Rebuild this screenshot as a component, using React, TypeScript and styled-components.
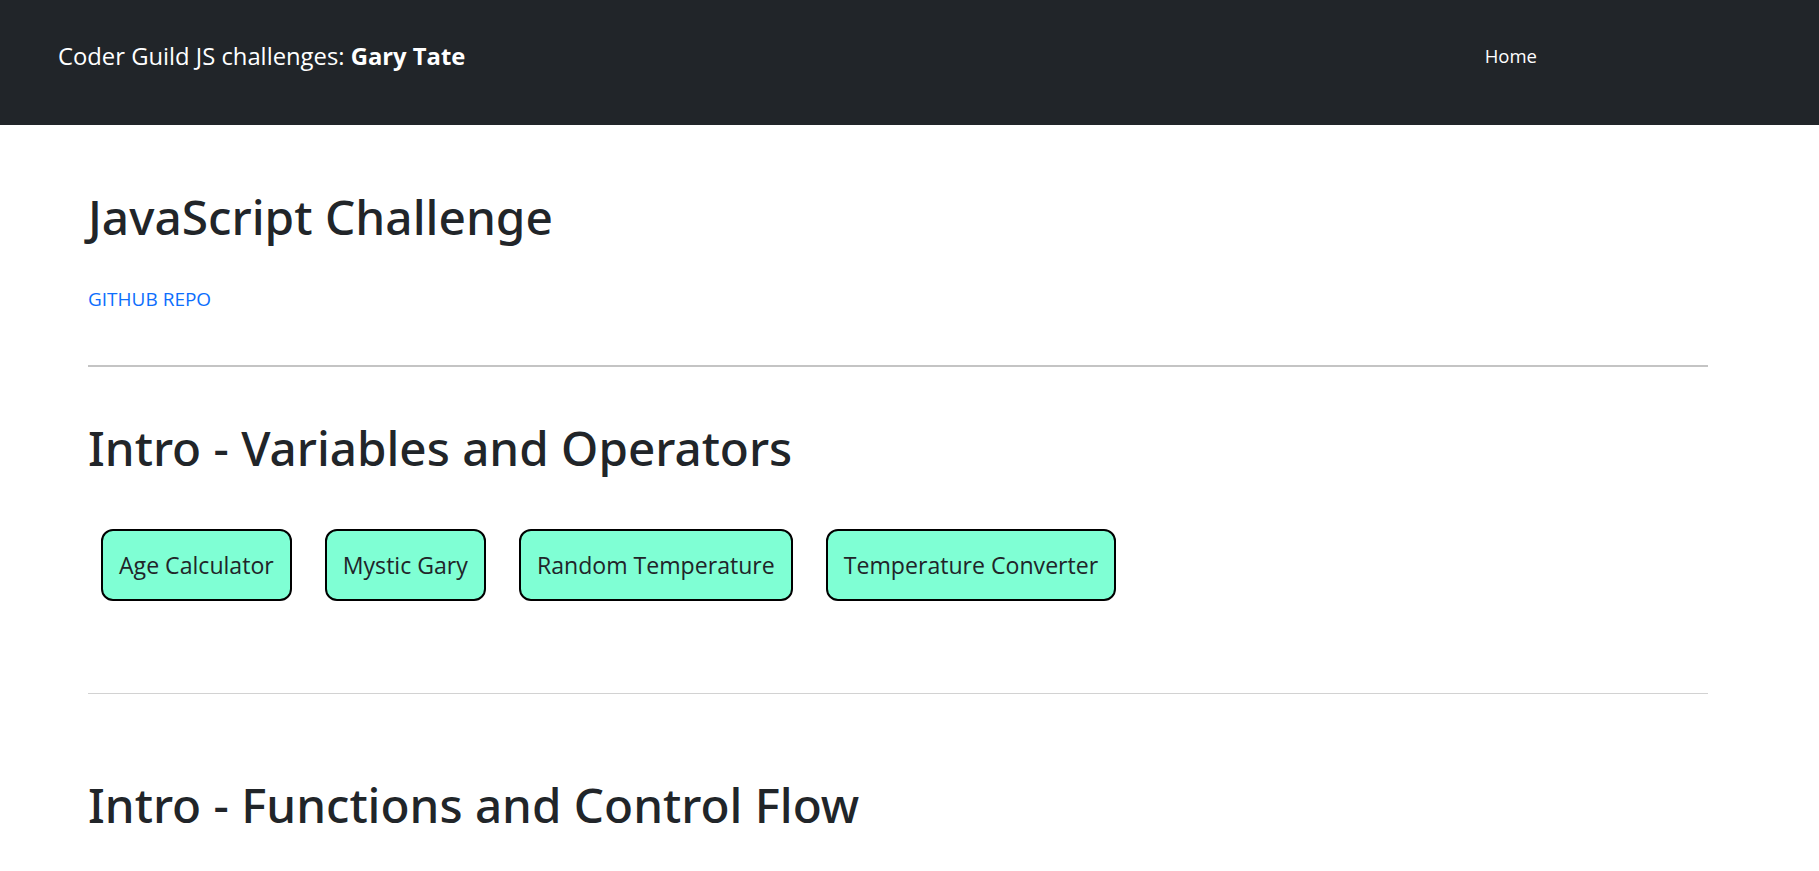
import React from "react";
import styled, { createGlobalStyle } from "styled-components";

const Global = createGlobalStyle`
  html, body { margin: 0; padding: 0; background: #fff; }
  body {
    font-family: "Open Sans", "Noto Sans", sans-serif;
    color: #212529;
    overflow: hidden;
  }
`;

const NavBar = styled.nav`
  height: 125px;
  background: #212529;
  display: flex;
  align-items: center;
  padding: 0 282px 14px 58px;
  box-sizing: border-box;
`;

const Brand = styled.a`
  color: #fff;
  font-size: 23.8px;
  text-decoration: none;
  white-space: nowrap;
  b { font-weight: 700; }
`;

const NavLink = styled.a`
  margin-left: auto;
  color: #fff;
  font-size: 18.5px;
  text-decoration: none;
`;

const Main = styled.main`
  padding: 0 111px 0 88px;
`;

const Title = styled.h1`
  margin: 63px 0 0;
  font-family: "Noto Sans", "Open Sans", sans-serif;
  font-size: 47.8px;
  font-weight: 500;
  line-height: 1.2;
`;

const RepoLink = styled.a`
  display: block;
  margin-top: 41px;
  font-size: 19px;
  color: #0d6efd;
  text-decoration: none;
  text-transform: uppercase;
`;

const Spacer = styled.div`
  height: 53px;
`;

const Rule = styled.hr<{ $strong?: boolean }>`
  margin: 0;
  border: 0;
  border-top: ${(p) => (p.$strong ? "2px solid #c4c4c4" : "1.5px solid #d2d2d2")};
`;

const Section = styled.section<{ $top: number }>`
  padding-top: ${(p) => p.$top}px;
`;

const SectionTitle = styled.h2`
  margin: 0;
  font-family: "Noto Sans", "Open Sans", sans-serif;
  font-size: 47.6px;
  font-weight: 500;
  line-height: 1.2;
`;

const ButtonRow = styled.div`
  display: flex;
  gap: 33px;
  padding: 0 0 0 13px;
  margin-top: 53px;
  margin-bottom: 92px;
`;

const Challenge = styled.button`
  height: 72px;
  padding: 0 16px;
  box-sizing: border-box;
  background: #7fffd4;
  border: 2px solid #000;
  border-radius: 12px;
  font-family: inherit;
  font-size: 23.1px;
  color: #212529;
  cursor: pointer;
`;

const challenges = ["Age Calculator", "Mystic Gary", "Random Temperature", "Temperature Converter"];

export default function App() {
  return (
    <>
      <Global />
      <NavBar>
        <Brand href="#">
          Coder Guild JS challenges: <b>Gary Tate</b>
        </Brand>
        <NavLink href="#">Home</NavLink>
      </NavBar>
      <Main>
        <Title>JavaScript Challenge</Title>
        <RepoLink href="#">Github Repo</RepoLink>
        <Spacer />
        <Rule $strong />
        <Section $top={52}>
          <SectionTitle>Intro - Variables and Operators</SectionTitle>
          <ButtonRow>
            {challenges.map((c) => (
              <Challenge key={c}>{c}</Challenge>
            ))}
          </ButtonRow>
        </Section>
        <Rule />
        <Section $top={82}>
          <SectionTitle>Intro - Functions and Control Flow</SectionTitle>
        </Section>
      </Main>
    </>
  );
}
